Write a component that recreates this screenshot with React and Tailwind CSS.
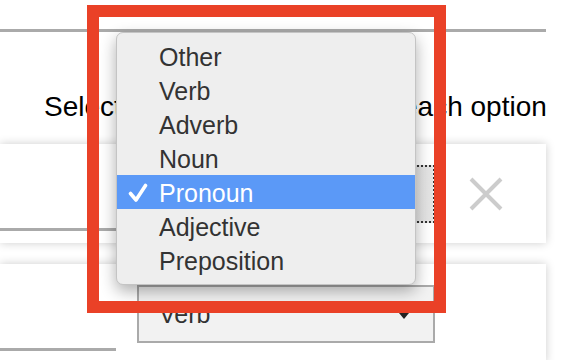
import React from 'react'

const options = ['Other', 'Verb', 'Adverb', 'Noun', 'Pronoun', 'Adjective', 'Preposition']

function CloseIcon() {
  return (
    <svg width="34" height="34" viewBox="0 0 34 34" className="shrink-0">
      <path d="M2 2 L32 32 M32 2 L2 32" stroke="#cccccc" strokeWidth="4" fill="none" />
    </svg>
  )
}

function Row({ value, focused, removable }) {
  return (
    <div className="w-[546px] h-[99px] bg-white shadow-[0_0_9px_rgba(0,0,0,0.2)] flex items-start pt-[21px]">
      {/* text input underline */}
      <div className="w-[116px] h-[66px] border-b-[3px] border-[#aaaaaa] shrink-0" />
      <div
        className={`ml-[21px] w-[298px] h-[58px] shrink-0 flex items-center justify-between pl-[20px] pr-[24px] text-[25px] text-[#333333] ${
          focused
            ? 'border-2 border-dotted border-[#333333] bg-gradient-to-r from-[#f0f0f0] to-[#e4e4e4]'
            : 'border-2 border-[#aaaaaa] bg-[#f2f2f2]'
        }`}
      >
        <span className="leading-[58px]">{value}</span>
        <span className="mt-[4px] w-0 h-0 border-l-[5px] border-r-[5px] border-t-[6px] border-l-transparent border-r-transparent border-t-[#222222]" />
      </div>
      {removable && (
        <div className="ml-[34px] mt-[12px]">
          <CloseIcon />
        </div>
      )}
    </div>
  )
}

export default function App() {
  return (
    <div
      className="relative w-[564px] h-[360px] overflow-hidden bg-white"
      style={{ fontFamily: '"Liberation Sans", Arial, sans-serif' }}
    >
      <div className="h-[29px]" />
      <div className="h-[3px] w-[546px] bg-[#aaaaaa]" />

      <h2 className="mt-[59px] pl-[44px] text-[28px] leading-[32px] text-black whitespace-nowrap font-normal">
        Select the part of speech for each option
      </h2>

      <div className="mt-[21px]">
        <Row value="Pronoun" focused removable />
      </div>
      <div className="mt-[21px]">
        <Row value="Verb" />
      </div>

      {/* open native select menu */}
      <div className="absolute left-[116px] top-[32px] w-[300px] h-[253px] rounded-[7px] bg-[#eeeeee] border border-[#c4c4c4] shadow-[0_6px_16px_rgba(0,0,0,0.32)] py-[6px]">
        {options.map((opt) => {
          const active = opt === 'Pronoun'
          return (
            <div
              key={opt}
              className={`relative h-[34px] pl-[42px] text-[25px] leading-[37px] ${
                active ? 'bg-[#5b99f7] text-white' : 'text-[#333333]'
              }`}
            >
              {active && (
                <svg width="20" height="20" viewBox="0 0 20 20" className="absolute left-[11px] top-[8px]">
                  <path d="M2.5 10.5 L8 17 L17.5 2.5" stroke="white" strokeWidth="3.6" fill="none" strokeLinejoin="round" strokeLinecap="round" />
                </svg>
              )}
              {opt}
            </div>
          )
        })}
      </div>

      {/* annotation frame */}
      <div className="absolute left-[87px] top-[5px] w-[359px] h-[308px] border-[12px] border-[#ea4127]" />
    </div>
  )
}
